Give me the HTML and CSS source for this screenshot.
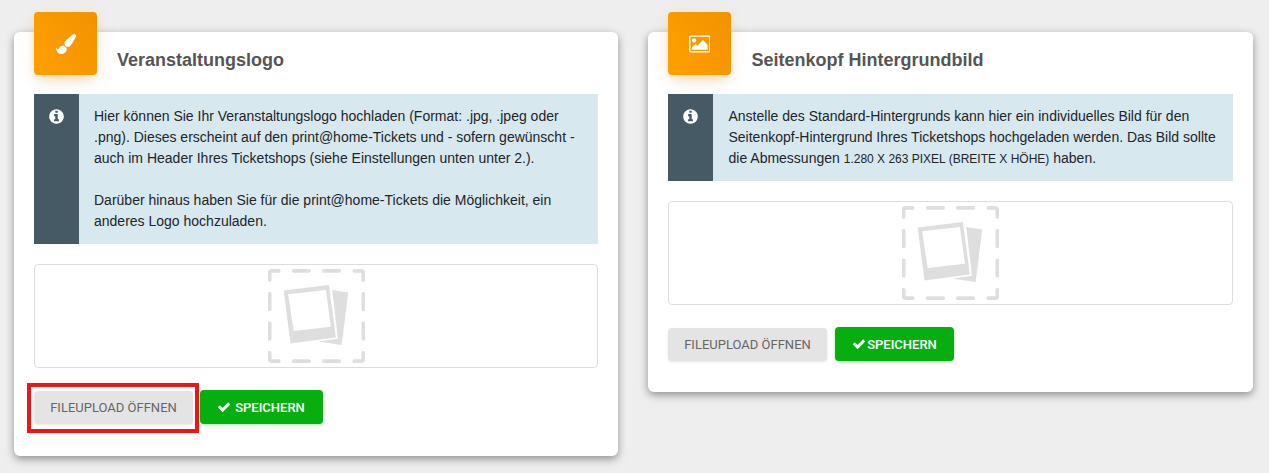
FILE: index.html
```html
<!DOCTYPE html>
<html lang="de">
<head>
<meta charset="utf-8">
<title>Veranstaltungslogo</title>
<link rel="stylesheet" href="styles.css">
</head>
<body>
<svg class="defs" width="0" height="0" aria-hidden="true">
  <defs>
    <symbol id="i-info" viewBox="0 0 1792 1792"><path fill="currentColor" d="M1152 1376v-160q0-14-9-23t-23-9h-96v-512q0-14-9-23t-23-9h-320q-14 0-23 9t-9 23v160q0 14 9 23t23 9h96v320h-96q-14 0-23 9t-9 23v160q0 14 9 23t23 9h448q14 0 23-9t9-23zm-128-896v-160q0-14-9-23t-23-9h-192q-14 0-23 9t-9 23v160q0 14 9 23t23 9h192q14 0 23-9t9-23zm640 416q0 209-103 385.500t-279.500 279.500-385.500 103-385.500-103-279.500-279.500-103-385.500 103-385.500 279.500-279.500 385.500-103 385.500 103 279.500 279.500 103 385.500z"/></symbol>
    <symbol id="i-check" viewBox="0 0 1792 1792"><path fill="currentColor" d="M1671 566q0 40-28 68l-724 724-136 136q-28 28-68 28t-68-28l-136-136-362-362q-28-28-28-68t28-68l136-136q28-28 68-28t68 28l294 295 656-657q28-28 68-28t68 28l136 136q28 28 28 68z"/></symbol>
    <symbol id="i-placeholder" viewBox="55 28 290 280">
      <g fill="none" stroke="#dedede" stroke-width="11" stroke-linecap="round" stroke-linejoin="round">
        <path d="M60 60V40Q60 33 67 33H87"/><path d="M132 33H178"/><path d="M222 33H268"/><path d="M313 33H333Q340 33 340 40V60"/>
        <path d="M60 102V148"/><path d="M60 190V236"/><path d="M60 278V296Q60 303 67 303H87"/>
        <path d="M132 303H178"/><path d="M222 303H268"/><path d="M313 303H333Q340 303 340 296V278"/>
        <path d="M340 102V148"/><path d="M340 190V236"/>
      </g>
      <path fill="#dedede" fill-rule="evenodd" d="M102 92L237 75L258 232L122 250ZM115 103L228 90L243 200L132 213Z"/>
      <path fill="#dedede" d="M247 90L295 98L275 255L205 244L264 236Z"/>
    </symbol>
  </defs>
</svg>
<main class="page">
  <section class="card">
    <header class="card-head">
      <div class="card-icon">
        <svg class="head-svg brush" viewBox="0 0 1792 1792"><path fill="currentColor" d="M1615 0q70 0 122.500 46.500t52.500 116.500q0 63-45 151-332 629-465 752-97 91-218 91-126 0-216.500-92.500t-90.500-219.500q0-128 92-212l638-579q59-54 130-54zm-909 1034q39 76 106.500 130t150.500 76l1 71q4 213-129.500 347t-348.500 134q-123 0-218-46.500t-152.500-127.500-86.500-183-29-220q7 5 41 30t62 44.500 59 36.500 46 17q41 0 55-37 25-66 57.500-112.500t69.500-76 88-47.500 103-25.500 119-10.500z"/></svg>
      </div>
      <h2 class="card-title">Veranstaltungslogo</h2>
    </header>
    <div class="info">
      <div class="info-side"><svg class="info-icon"><use href="#i-info"/></svg></div>
      <div class="info-text">
        <p>Hier können Sie Ihr Veranstaltungslogo hochladen (Format: .jpg, .jpeg oder .png). Dieses erscheint auf den print@home-Tickets und - sofern gewünscht - auch im Header Ihres Ticketshops (siehe Einstellungen unten unter 2.).</p>
        <p class="para-gap">Darüber hinaus haben Sie für die print@home-Tickets die Möglichkeit, ein anderes Logo hochzuladen.</p>
      </div>
    </div>
    <div class="dropzone"><svg class="placeholder"><use href="#i-placeholder"/></svg></div>
    <div class="actions">
      <div class="highlighted">
        <button class="btn btn-grey" type="button">Fileupload öffnen</button>
      </div>
      <button class="btn btn-green btn-first" type="button"><svg class="check"><use href="#i-check"/></svg>Speichern</button>
    </div>
  </section>
  <section class="card card-short">
    <header class="card-head">
      <div class="card-icon">
        <svg class="head-svg picture" viewBox="0 0 1920 1792"><path fill="currentColor" d="M640 576q0 80-56 136t-136 56-136-56-56-136 56-136 136-56 136 56 56 136zm1024 384v448h-1408v-192l320-320 160 160 512-512zm96-704h-1600q-13 0-22.500 9.500t-9.500 22.500v1216q0 13 9.500 22.500t22.500 9.500h1600q13 0 22.500-9.500t9.500-22.500v-1216q0-13-9.500-22.500t-22.500-9.500zm160 32v1216q0 66-47 113t-113 47h-1600q-66 0-113-47t-47-113v-1216q0-66 47-113t113-47h1600q66 0 113 47t47 113z"/></svg>
      </div>
      <h2 class="card-title">Seitenkopf Hintergrundbild</h2>
    </header>
    <div class="info">
      <div class="info-side"><svg class="info-icon"><use href="#i-info"/></svg></div>
      <div class="info-text">
        <p>Anstelle des Standard-Hintergrunds kann hier ein individuelles Bild für den Seitenkopf-Hintergrund Ihres Ticketshops hochgeladen werden. Das Bild sollte die Abmessungen <span class="small-caps">1.280 x 263 Pixel (Breite x Höhe)</span> haben.</p>
      </div>
    </div>
    <div class="dropzone"><svg class="placeholder"><use href="#i-placeholder"/></svg></div>
    <div class="actions">
      <button class="btn btn-grey" type="button">Fileupload öffnen</button>
      <button class="btn btn-green btn-second" type="button"><svg class="check"><use href="#i-check"/></svg>Speichern</button>
    </div>
  </section>
</main>
</body>
</html>
```
FILE: styles.css
```css
* { box-sizing: border-box; }
html, body { margin: 0; padding: 0; }
body {
  height: 473px;
  overflow: hidden;
  background: #eeeeee;
  font-family: "Liberation Sans", Arial, sans-serif;
  font-size: 14px;
  color: #212529;
}
.defs { position: absolute; }
.page {
  display: grid;
  grid-template-columns: 604px 605px;
  gap: 30px;
  align-items: start;
  padding: 32px 16px 0 14px;
}
.card {
  background: #ffffff;
  border-radius: 6px;
  padding: 0 20px 32px;
  box-shadow: 0 3px 8px rgba(0, 0, 0, 0.4);
}
.card-short { padding-bottom: 31px; }
.card-head {
  display: flex;
  gap: 20px;
  height: 62px;
}
.card-short .card-head { gap: 20.500px; }
.card-icon {
  flex: none;
  width: 63px;
  height: 63px;
  margin-top: -20px;
  display: flex;
  align-items: center;
  justify-content: center;
  border-radius: 4px;
  color: #ffffff;
  background: linear-gradient(60deg, #ffa000, #f39200);
  box-shadow: 0 6px 14px -4px rgba(220, 140, 30, 0.5);
}
.head-svg { display: block; }
.brush { width: 20px; height: 20px; }
.picture { width: 21.500px; height: 20px; }
.card-title {
  margin: 0;
  padding-top: 17px;
  font-size: 18px;
  line-height: 22px;
  font-weight: 700;
  color: #555555;
}
.info {
  display: flex;
  background: #d8e8ef;
}
.info-side {
  flex: none;
  width: 45px;
  background: #455a64;
  padding: 14px 0 0 14px;
  color: #ffffff;
}
.info-icon { display: block; width: 17px; height: 17px; }
.info-text {
  padding: 12px 15px;
  line-height: 21px;
  flex: 1;
}
.card-short .info-text { padding-left: 15.500px; }
.info-text p { margin: 0; }
.info-text .para-gap { margin-top: 21px; }
.small-caps { font-size: 12px; line-height: 1; text-transform: uppercase; }
.dropzone {
  margin-top: 20px;
  height: 104px;
  border: 1px solid #dddddd;
  border-radius: 4px;
  display: flex;
  align-items: center;
  justify-content: center;
}
.placeholder { display: block; width: 97px; height: 94px; }
.actions {
  display: flex;
  align-items: flex-end;
  margin-top: 22px;
  gap: 7px;
}
.btn {
  font-family: Roboto, "Liberation Sans", sans-serif;
  font-size: 13px;
  line-height: 15px;
  text-transform: uppercase;
  border: 0;
  border-radius: 4px;
  margin: 0;
  display: flex;
  align-items: center;
  justify-content: center;
}
.btn-grey {
  width: 159px;
  height: 33px;
  color: #666666;
  background: #e4e4e4;
  box-shadow: 0 1px 3px rgba(0, 0, 0, 0.1);
}
.btn-green {
  height: 34px;
  color: #ffffff;
  font-weight: 500;
  background: #07ae10;
  box-shadow: 0 1px 3px rgba(7, 174, 16, 0.35);
}
.btn-first { width: 123px; padding-left: 5px; }
.btn-second { width: 119px; margin-left: 1px; }
.check { display: block; width: 14px; height: 14px; margin-right: 4px; }
.btn-second .check { margin-right: 1px; }
.highlighted { position: relative; }
.highlighted::after {
  content: "";
  position: absolute;
  left: -7px;
  top: -8px;
  right: -6px;
  bottom: -9px;
  border: 4px solid #f01414;
  pointer-events: none;
}
```
